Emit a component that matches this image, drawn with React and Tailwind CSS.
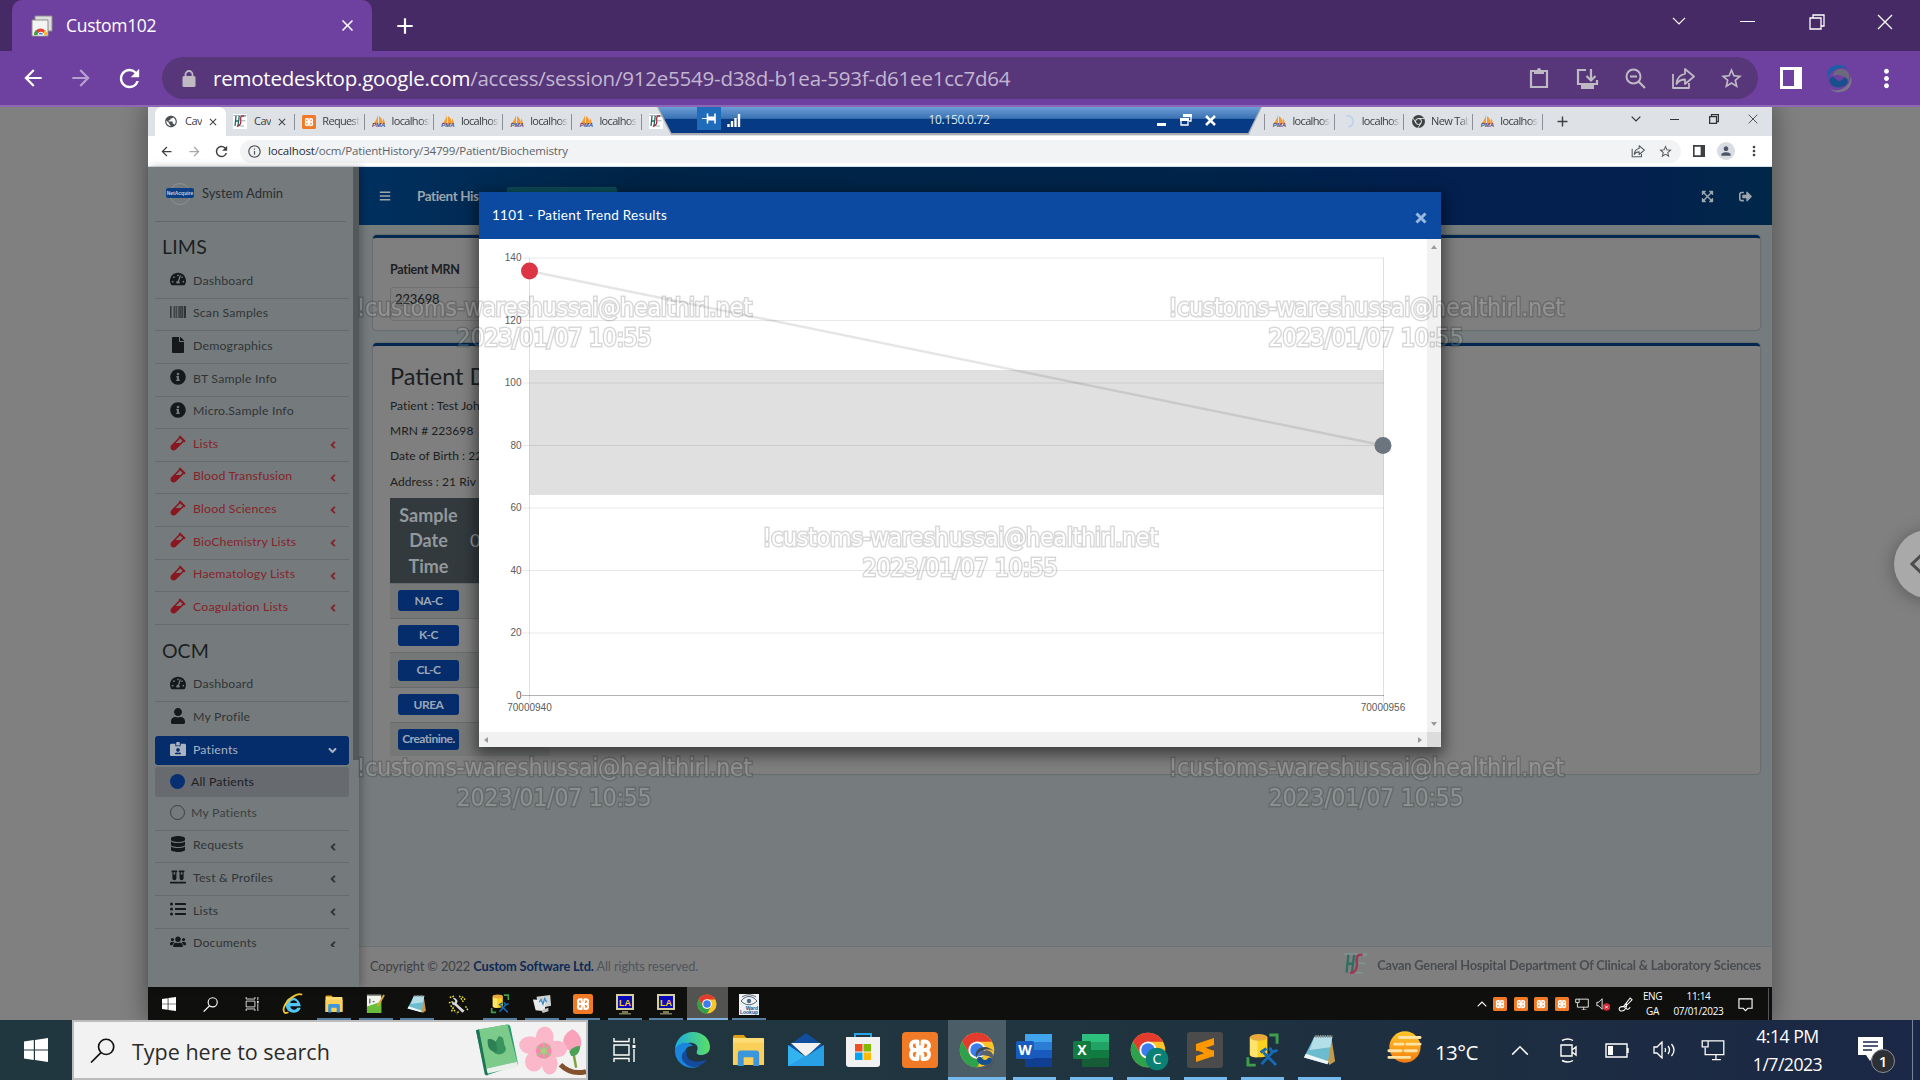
import React from "react";
import {
  FaTachometerAlt, FaBarcode, FaFile, FaInfoCircle, FaVial, FaUser, FaDatabase, FaVials,
  FaListUl, FaUsers, FaAngleLeft, FaAngleDown, FaExpandArrowsAlt, FaSignOutAlt, FaBars, FaIdCardAlt,
} from "react-icons/fa";
import {
  MdArrowBack, MdArrowForward, MdRefresh, MdStarBorder, MdClose, MdAdd, MdMoreVert, MdPublic,
  MdInfoOutline, MdPerson,
} from "react-icons/md";

const S = ({ w, h = w, box, className = "", children }) => (
  <svg width={w} height={h} viewBox={box} className={"shrink-0 " + className} fill="none">{children}</svg>
);

/* ---------- shared glyphs ---------- */
const Share = ({ size, sw = 1.8 }) => (
  <S w={size} box="0 0 24 24"><path d="M2 8v14h16v-5M14 3l9 7.500-9 7.500v-4.500c-4 0-6.500 1.200-8.500 4.500.5-6 3.500-9.500 8.500-10.200V3z" stroke="currentColor" strokeWidth={sw} strokeLinejoin="round" /></S>
);
const Panel = ({ size }) => (
  <S w={size} h={size} box="0 0 22 22"><path d="M0 0h22v22H0zM3 3v16h11V3z" fill="currentColor" fillRule="evenodd" /></S>
);
const Chevron = ({ w, up, sw = 1.3 }) => (
  <S w={w} h={w * 0.6} box="0 0 15 9"><path d={up ? "M1 8l6.500-6.500L14 8" : "M1 1l6.500 6.500L14 1"} stroke="currentColor" strokeWidth={sw} /></S>
);
const Restore = ({ w, sw = 1.3 }) => (
  <S w={w} box="0 0 16 16"><path d="M1 4h11v11H1zM4 4V1h11v11h-3" stroke="currentColor" strokeWidth={sw} /></S>
);
const Cross = ({ w }) => (
  <S w={w} box="0 0 16 16"><path d="M1 1l14 14M15 1L1 15" stroke="currentColor" strokeWidth="1.300" /></S>
);
const Windows = ({ size }) => (
  <S w={size} box="0 0 24 24"><path d="M0 3.500l9.800-1.400v9.400H0zM11 1.900L24 0v11.500H11zM0 12.600h9.800V22L0 20.600zM11 12.600h13V24l-13-1.900z" fill="white" /></S>
);
const Search = ({ size, color, sw = 1.8 }) => (
  <S w={size} box="0 0 24 24"><circle cx="15.500" cy="8.500" r="7.300" stroke={color} strokeWidth={sw} /><path d="M10.500 14L1 23.500" stroke={color} strokeWidth={sw} /></S>
);
const TaskView = ({ size }) => (
  <S w={size} box="0 0 24 24"><path d="M2 0v3.500h15V0M2 24v-3.500h15V24M2 7h15v10H2zM22 0v5.500M22 11v13" stroke="white" strokeWidth="1.400" /><path d="M20.500 7h3v3h-3z" fill="white" /></S>
);
const Chrome = ({ size, children }) => (
  <S w={size} box="0 0 48 48" className="overflow-visible">
    <circle cx="24" cy="24" r="23" fill="#fbc529" />
    <path d="M24 1A23 23 0 0 0 4.100 12.500L14 29.800 24 13h19.900A23 23 0 0 0 24 1z" fill="#e33b2e" />
    <path d="M4.100 12.500A23 23 0 0 0 24 47l10-17.200A11.500 11.500 0 0 1 14 29.800z" fill="#2da14c" />
    <circle cx="24" cy="24" r="11.500" fill="white" /><circle cx="24" cy="24" r="9" fill="#3b7ded" />
    {children}
  </S>
);
const SwirlShape = ({ dark }) => (
  <g>
    <path d="M3 16C0 8 5 1 14 1c5 0 9 2 12 6-5-4-10-4-15-1-5 2-7 5-8 10z" fill={dark ? "#3f4a57" : "#1a5fa8"} />
    <path d="M27 13c3 8-2 16-11 17-5 1-9-1-12-4 5 3 10 3 15 0 5-3 7-7 8-13z" fill={dark ? "#4d5561" : "#77788c"} />
    <path d="M8 13c0-6 7-9 12-7 6 2 7 9 4 13 0-4-3-6-6-6-3-1-6-2-10 0z" fill={dark ? "#59616b" : "#6b6a7c"} />
    <path d="M4 17c1-3 4-4 6-2s3 4 6 3 2-3 5-3 4 4 1 7c-5 5-17 4-18-5z" fill="#174f8f" />
  </g>
);
const Xampp = ({ size }) => (
  <S w={size} box="0 0 36 36">
    <rect width="36" height="36" rx="4" fill="#f17a26" />
    <path d="M15.500 9.500H13a4 4 0 0 0-4 4V14a4 4 0 0 0 4 4 4 4 0 0 0-4 4v1a4 4 0 0 0 4 4h2.500M20.500 9.500H23a4 4 0 0 1 4 4V14a4 4 0 0 1-4 4 4 4 0 0 1 4 4v1a4 4 0 0 1-4 4h-2.500M13 18h10M15.500 9.500v3.500q0 2.500 2.500 2.500t2.500-2.500V9.500M15.500 27v-3.500q0-2.500 2.500-2.500t2.500 2.500V27" stroke="white" strokeWidth="3.800" strokeLinejoin="round" strokeLinecap="round" />
  </S>
);
const Folder = ({ size }) => (
  <S w={size} box="0 0 34 34">
    <path d="M1 3q0-2 2-2h9l3 3H1z" fill="#e0a117" /><path d="M1 4h31q1 0 1 1v26q0 1-1 1H2q-1 0-1-1z" fill="#fddc75" />
    <path d="M1 9h32v22q0 1-1 1H2q-1 0-1-1z" fill="#fad05b" />
    <path d="M6 33V20q0-3 3-3h16q3 0 3 3v13h-6v-9H12v9z" fill="#3b96db" />
  </S>
);
const Notepad = ({ size }) => (
  <S w={size} box="0 0 36 36">
    <path d="M14 4h16l4 26-6 4z" fill="#c49a4e" /><path d="M12 4h19l-5 29L1 26z" fill="#6dbbce" />
    <path d="M12 4h19l-2 11-22 3z" fill="#b5dfe8" /><path d="M1 26l25 7 1-3L3 22z" fill="#eef6f7" />
    <path d="M13 3.500h18" stroke="#8b9294" strokeWidth="3" strokeDasharray="1.500 1" />
  </S>
);
const Sql = ({ size }) => (
  <S w={size} box="0 0 36 36">
    <path d="M25 2h8v9M3 25v8h8" stroke="#3e9e4c" strokeWidth="3" />
    <path d="M5 4v18c0 4 18 4 18 0V4z" fill="#fbd21f" /><path d="M5 4v18c0 2 4 3 8 3V4z" fill="#fee46c" />
    <ellipse cx="14" cy="4.500" rx="9" ry="3.500" fill="#e9a83b" />
    <path d="M19 20l13 13M29 19L17 32" stroke="#1569b5" strokeWidth="2.800" /><path d="M26 15q0 4 3 4t4-2M16 20l6-4" stroke="#1569b5" strokeWidth="3" />
  </S>
);
const Display = ({ w, sw = 1.5 }) => (
  <S w={w} h={w * 0.9} box="0 0 24 22"><path d="M7 2h16v14H7M4 9v7h3M1 2h6v6H1zM15 16v5M11 21h9" stroke="white" strokeWidth={sw} /></S>
);
const Pma = () => (
  <div className="flex w-[14px] shrink-0 flex-col items-center">
    <S w={14} h={10} box="0 0 14 10"><path d="M6 0v9H1c2-2 4-5 5-9zM7 1c3 2 4 5 4 8H7zM11 3c1 2 2 4 2 6h-2z" fill="#f59b34" /></S>
    <span className="-mt-[3px] font-['Liberation_Sans'] text-[6px] leading-[7px] font-bold text-[#4c4a86] italic">PMA</span>
  </div>
);
const Hse = ({ size = 13 }) => (
  <S w={size} h={size * 0.86} box="0 0 28 24">
    <path d="M1 1h26M18 2.500h8M17 11.500h8M14 22h8" stroke="#7d9c96" strokeWidth="1.600" />
    <path d="M6 2L4 22M4.500 12h6M12.500 2L10 22" stroke="#1d6b5c" strokeWidth="2.600" />
    <path d="M22 2c-7-1-7 3-6.500 8S15 22 8 22.500" stroke="#a82544" strokeWidth="2.600" />
  </S>
);

/* ---------- outer browser ---------- */
function OuterBrowser() {
  return (
    <header className="shrink-0 font-['Open_Sans',sans-serif] text-white">
      <div className="flex h-[51px] bg-[#462a65] pl-3">
        <div className="flex w-[360px] items-center rounded-t-[10px] bg-[#6e41a0] pr-[15px] pl-[19px]">
          <S w={22} box="0 0 22 22"><path d="M4 1h17v15H4z" fill="#dedede" stroke="#8d8d86" /><path d="M1 5h16v16H1z" fill="#f4f4f4" stroke="#8d8d86" /><path d="M3 20a6.500 6.500 0 0 1 13 0z" fill="#e24133" /><path d="M3 20a6 6 0 0 1 2-5l3 5z" fill="#37a650" /><path d="M16 20a6 6 0 0 0-2-5l-3 5z" fill="#f6c12c" /><path d="M7 20a2.800 2.800 0 0 1 5.600 0z" fill="#3a7ded" stroke="white" /></S>
          <span className="ml-[13px] flex-1 text-[17.500px] tracking-[-0.018em]">Custom102</span>
          <MdClose size={19} />
        </div>
        <div className="ml-[21px] flex flex-1 items-center"><MdAdd size={24} className="scale-110" /></div>
        <div className="flex h-[43px] items-center pr-px">
          <div className="flex w-[69px] justify-center"><Chevron w={14} /></div>
          <div className="flex w-[69px] justify-center"><div className="h-px w-[15px] bg-white" /></div>
          <div className="flex w-[69px] justify-center"><Restore w={16} /></div>
          <div className="flex w-[68px] justify-center"><Cross w={16} /></div>
        </div>
      </div>
      <div className="flex h-[56px] items-center border-b-2 border-[#8d66b5] bg-[#6e41a0] pl-[9px]">
        <div className="flex w-12 justify-center"><MdArrowBack size={26} /></div>
        <div className="flex w-12 justify-center opacity-50"><MdArrowForward size={26} /></div>
        <div className="flex w-12 justify-center"><MdRefresh size={29} /></div>
        <div className="ml-[9px] flex h-[42px] w-[1596px] items-center rounded-full bg-[#57377a] pl-[20px] text-[#bfb9c4]">
          <S w={14} h={17} box="0 0 14 17"><path d="M3.500 8V4.500a3.500 3.500 0 0 1 7 0V8" stroke="currentColor" strokeWidth="1.800" /><rect x=".5" y="6" width="13" height="11" rx="1.500" fill="currentColor" /></S>
          <div className="ml-[17px] flex-1 pt-px text-[20.500px] tracking-[-0.0105em] text-[#c3b6d0]"><span className="text-white">remotedesktop.google.com</span>/access/session/912e5549-d38d-b1ea-593f-d61ee1cc7d64</div>
          <div className="flex items-center pr-[3px]">
            <div className="flex w-12 justify-center"><S w={20} h={22} box="0 0 20 22"><path d="M2 4h16v16H2z" stroke="currentColor" strokeWidth="2.200" /><path d="M5 3h3a2 2 0 0 1 4 0h3v4H5z" fill="currentColor" /></S></div>
            <div className="flex w-12 justify-center"><S w={23} box="0 0 23 23"><path d="M10 3H2v14h19v-4M15 2v11M10.500 9l4.500 4.500L19.500 9" stroke="currentColor" strokeWidth="2.200" /><path d="M5 18h13v4H5z" fill="currentColor" /></S></div>
            <div className="flex w-12 justify-center"><S w={21} box="0 0 21 21"><circle cx="8.500" cy="8.500" r="7" stroke="currentColor" strokeWidth="2" /><path d="M13.500 13.500l6.500 6.500M5 8.500h7" stroke="currentColor" strokeWidth="2.200" /></S></div>
            <div className="flex w-12 justify-center"><Share size={24} /></div>
            <div className="flex w-12 justify-center"><MdStarBorder size={25} /></div>
          </div>
        </div>
        <div className="flex w-[65px] justify-center"><Panel size={22} /></div>
        <div className="flex w-8 justify-center"><S w={29} box="0 0 30 31"><SwirlShape /></S></div>
        <div className="flex flex-1 justify-center pr-[2px]"><MdMoreVert size={29} /></div>
      </div>
    </header>
  );
}

/* ---------- remote browser ---------- */
const TABS = [
  ["globe", "Cav", "x"], ["hse", "Cav", "x"], ["xampp", "Request"], ["pma", "localhost"], ["pma", "localhost"], ["pma", "localhost"], ["pma", "localhost"], ["hse", ""],
  ["", ""], ["", ""], ["", ""], ["", ""], ["", ""], ["", ""], ["", ""], ["", ""],
  ["pma", "localhost"], ["spin", "localhost"], ["chrome", "New Tab"], ["pma", "localhost"],
];
function TabIcon({ kind }) {
  if (kind === "globe") return <MdPublic size={15} className="text-[#4b4f52]" />;
  if (kind === "hse") return <div className="bg-white py-px"><Hse size={14} /></div>;
  if (kind === "xampp") return <Xampp size={14} />;
  if (kind === "pma") return <Pma />;
  if (kind === "spin") return <S w={13} box="0 0 14 14"><path d="M5 1a6 6 0 0 1 2 12" stroke="#b9d0f2" strokeWidth="1.600" /></S>;
  if (kind === "chrome") return <S w={13} box="0 0 14 14"><circle cx="7" cy="7" r="7" fill="#3e4043" /><circle cx="7" cy="7" r="3.200" fill="#3e4043" stroke="white" strokeWidth="1" /><path d="M7 3.800h6M4.200 8.500l-3-5M9.500 9l-3 5" stroke="white" strokeWidth=".8" /></S>;
  return null;
}
function InnerBrowser() {
  return (
    <div className="relative shrink-0 font-['Open_Sans',sans-serif] text-[#3c4043]">
      <div className="flex h-[29px] bg-[#dee1e5] pl-[7px]">
        {TABS.map(([kind, text, x], i) => (
          <div key={i} className={i === 0 ? "flex w-[71px] shrink-0 items-center rounded-t-[7px] bg-white pl-[9px]" : "flex w-[69.300px] shrink-0 items-center pl-[7px]"}>
            <div className="flex w-[14px] justify-center"><TabIcon kind={kind} /></div>
            <span className={x ? "ml-[7px] w-[17px] overflow-hidden text-[11px] tracking-[-0.05em] whitespace-nowrap" : "ml-[6px] w-[38px] overflow-hidden text-[11px] tracking-[-0.06em] whitespace-nowrap [mask-image:linear-gradient(90deg,#000_75%,transparent)]"}>{text}</span>
            {x && <MdClose size={12} className="ml-[5px]" />}
            {i > 0 && <div className="ml-auto h-4 w-px bg-[#8c9096]" />}
          </div>
        ))}
        <div className="flex w-[40px] items-center justify-center"><MdAdd size={17} /></div>
        <div className="flex h-[24px] flex-1 items-center justify-end text-[#333]">
          <div className="flex w-[39px] justify-center"><Chevron w={10} sw={1.8} /></div>
          <div className="flex w-[39px] justify-center"><div className="h-px w-[9px] bg-[#333]" /></div>
          <div className="flex w-[39px] justify-center"><Restore w={10} sw={2} /></div>
          <div className="flex w-[39px] justify-center"><Cross w={10} /></div>
        </div>
      </div>
      <div className="flex h-[31px] items-center border-b border-[#d5dde5] bg-white pl-1">
        <div className="flex w-7 justify-center"><MdArrowBack size={15} /></div>
        <div className="flex w-7 justify-center text-[#a5a7aa]"><MdArrowForward size={15} /></div>
        <div className="flex w-[27px] justify-center"><MdRefresh size={17} /></div>
        <div className="ml-[5px] flex h-[23px] w-[1441px] items-center rounded-full bg-[#f1f3f4] pl-[7px] text-[#55595d]">
          <MdInfoOutline size={15} />
          <span className="ml-[6px] flex-1 text-[11.500px] tracking-[-0.015em] text-[#5f6368]"><span className="text-[#2a2d30]">localhost</span>/ocm/PatientHistory/34799/Patient/Biochemistry</span>
          <div className="mr-[8px] flex items-center gap-[13px]"><Share size={14} /><MdStarBorder size={15} /></div>
        </div>
        <div className="flex w-9 justify-center"><Panel size={12} /></div>
        <div className="flex w-[18px] justify-center rounded-full bg-[#d9dde3] p-[2px] text-[#4a5568]"><MdPerson size={14} /></div>
        <div className="flex flex-1 justify-center"><MdMoreVert size={16} /></div>
      </div>

      <div className="absolute top-0 left-[509px] h-[28px] w-[605px] bg-[#a9adb2] [clip-path:polygon(0_0,100%_0,97.800%_100%,2.300%_100%)]">
        <div className="flex h-[26px] items-center bg-[linear-gradient(180deg,#6c9fd6_0%,#3a71b2_44%,#063a83_46%,#063a85_100%)] text-white [clip-path:polygon(.2%_0,99.800%_0,97.700%_100%,2.400%_100%)]">
          <div className="ml-[40px] flex h-[23px] w-[24px] items-center justify-center self-start bg-[#1f6cba]"><S w={14} h={11} box="0 0 14 11"><path d="M0 5.500h5" stroke="white" strokeWidth="1.200" /><path d="M5.500 .5v10M13 .5v10" stroke="white" strokeWidth="1.600" /><path d="M6 3.500h7v4H6z" fill="white" /></S></div>
          <S w={14} h={13} box="0 0 14 13" className="ml-[6px]"><path d="M1.500 13v-3M5 13V7M8.500 13V4M12 13V0" stroke="white" strokeWidth="2.400" /></S>
          <span className="flex-1 text-center text-[12px] tracking-[-0.025em] text-[#dde8f5]"><span className="ml-[20px]">10.150.0.72</span></span>
          <div className="mt-2 h-[3px] w-[9px] bg-white" />
          <div className="ml-[14px]"><S w={12} box="0 0 12 12"><path d="M4 1h7v6H9M1 5h7v6H1z" stroke="white" strokeWidth="1.300" /><path d="M3 0h9v3H3zM0 4h9v3H0z" fill="white" /></S></div>
          <div className="mr-[46px] ml-[13px]"><S w={11} box="0 0 11 11"><path d="M1 1l9 9M10 1l-9 9" stroke="white" strokeWidth="2.500" /></S></div>
        </div>
      </div>
    </div>
  );
}

/* ---------- LIMS page ---------- */
const LIMS = [
  [FaTachometerAlt, "Dashboard"], [FaBarcode, "Scan Samples"], [FaFile, "Demographics"], [FaInfoCircle, "BT Sample Info"], [FaInfoCircle, "Micro.Sample Info"],
  [FaVial, "Lists", 1], [FaVial, "Blood Transfusion", 1], [FaVial, "Blood Sciences", 1], [FaVial, "BioChemistry Lists", 1], [FaVial, "Haematology Lists", 1], [FaVial, "Coagulation Lists", 1],
];
function NavItem({ icon: Icon, text, red, arrow, last }) {
  return (
    <div className={"flex h-[32.650px] shrink-0 items-center border-b pl-[13px] " + (last ? "border-transparent " : "border-[#666a6d] ") + (red ? "text-[#85232b]" : "text-[#303437]")}>
      <div className={"flex w-[19px] justify-center pb-[5px] " + (red ? "text-[#8a1620]" : "text-[#16191b]")}><Icon size={16} /></div>
      <span className="ml-[6px] flex-1 pb-[2px] text-[12.300px] tracking-[0.015em]">{text}</span>
      {arrow && <FaAngleLeft size={12} className="mr-[10px]" />}
    </div>
  );
}
function Sidebar() {
  return (
    <aside className="relative z-10 flex w-[211px] shrink-0 bg-[#757b7c] shadow-[3px_0_8px_rgba(0,0,0,.25)]">
      <div className="flex w-[205px] flex-col pl-[7px]">
        <div className="flex h-[55px] w-[191px] items-center border-b border-[#63686b] pl-[11px]">
          <div className="relative flex h-[22px] w-[28px] items-center justify-center pb-[3px]">
            <div className="absolute top-0 size-[22px] rounded-full border border-[#8d9293]" />
            <div className="relative w-[28px] rounded-[2px] bg-[#0b3f85] text-center font-['Liberation_Sans'] text-[5px] leading-[10px] font-bold text-[#c4ccd6]">NetAcquire</div>
          </div>
          <span className="ml-[8px] text-[13px] text-[#2a2d30]">System Admin</span>
        </div>
        <div className="flex h-[725px] w-[194px] flex-col overflow-hidden">
          <div className="flex h-[44px] shrink-0 items-center pt-[6px] pl-[7px] text-[19.500px] tracking-[0.01em] text-[#1c1f21]">LIMS</div>
          {LIMS.map(([icon, text, red], i) => <NavItem key={i} icon={icon} text={text} red={red} arrow={red} />)}
          <div className="flex h-[44.500px] shrink-0 items-center pt-[6px] pl-[7px] text-[19.500px] text-[#1c1f21]">OCM</div>
          <NavItem icon={FaTachometerAlt} text="Dashboard" />
          <NavItem icon={FaUser} text="My Profile" last />
          <div className="mt-[1px] flex h-[29px] shrink-0 items-center rounded-[3px] bg-[#052d6b] pl-[13px] text-[#a9b3c2]">
            <div className="flex w-[19px] justify-center pb-[3px]"><FaIdCardAlt size={16} /></div>
            <span className="ml-[6px] flex-1 pb-px text-[12.300px] tracking-[0.015em]">Patients</span>
            <FaAngleDown size={13} className="mr-[10px]" />
          </div>
          <div className="mt-[2px] flex h-[30px] shrink-0 items-center rounded-[3px] bg-[#676b6f] pl-[15px] text-[#1d2023]">
            <div className="size-[15px] rounded-full bg-[#072f72]" /><span className="ml-[6px] text-[12.300px] tracking-[0.015em]">All Patients</span>
          </div>
          <div className="flex h-[34px] shrink-0 items-center border-b border-[#666a6d] pb-px pl-[15px] text-[#3b3f42]">
            <div className="size-[15px] rounded-full border-[1.500px] border-[#3b3f42]" /><span className="ml-[6px] text-[12.300px] tracking-[0.015em]">My Patients</span>
          </div>
          <NavItem icon={FaDatabase} text="Requests" arrow />
          <NavItem icon={FaVials} text="Test & Profiles" arrow />
          <NavItem icon={FaListUl} text="Lists" arrow />
          <NavItem icon={FaUsers} text="Documents" arrow />
        </div>
      </div>
      <div className="h-[593px] w-[6px] bg-[#55585a]" />
    </aside>
  );
}

function Card({ className, children }) {
  return <section className={"rounded-[4px] border-t-[3px] border-[#03284f] bg-[#7f7f7f] shadow-[0_0_2px_rgba(0,0,0,.4)] " + className}>{children}</section>;
}
function Main() {
  return (
    <main className="flex min-w-0 flex-1 flex-col bg-[#767c7d]">
      <nav className="flex h-[58px] shrink-0 items-center bg-[linear-gradient(90deg,#00305f_0%,#002446_20%,#00244a_60%,#03204f_75%,#03204f_90%,#002848_100%)] px-5 text-[#9da5ad]">
        <FaBars size={12} />
        <span className="ml-[26px] w-[88px] text-[13.500px] font-bold tracking-[-0.03em] whitespace-nowrap">Patient Hist</span>
        <div className="ml-[2px] h-[19px] w-[110px] rounded-[2px] bg-[#0b4b55]" />
        <div className="ml-auto flex gap-[25px]"><FaExpandArrowsAlt size={13} /><FaSignOutAlt size={13} /></div>
      </nav>
      <div className="flex min-h-0 flex-1 flex-col pr-[12px] pl-[14px]">
        <Card className="mt-[10px] h-[95px] shrink-0 px-[17px] pt-[23px]">
          <div className="text-[12.500px] leading-[18px] font-bold tracking-[-0.02em] text-[#1d2022]">Patient MRN</div>
          <div className="mt-[8px] flex h-[34px] w-[200px] items-center rounded-[3px] border border-[#6d7072] pb-2 pl-[4px] text-[13px] tracking-[-0.01em] text-[#15181a]">223698</div>
        </Card>
        <Card className="mt-[13px] h-[431px] shrink-0 px-[17px] pt-[14px] text-[#1b1e20]">
          <div className="text-[23.500px] leading-[32px]">Patient D</div>
          <div className="mt-px text-[12px] leading-[25.200px] tracking-[0.005em]">
            <p>Patient : Test Joh</p><p>MRN # 223698</p><p>Date of Birth : 22</p><p>Address : 21 Riv</p>
          </div>
          <div className="mt-[4px] flex h-[85px] w-[160px] bg-[#323a3e] text-center text-[18px] leading-[25.500px] font-bold text-[#92989b]">
            <div className="w-[77px] pt-[5px]">Sample Date Time</div><div className="pt-[30px] pl-[3px] font-normal">0</div>
          </div>
          {["NA-C", "K-C", "CL-C", "UREA", "Creatinine."].map((t, i) => (
            <div key={t} className={"flex h-[34.700px] w-[160px] items-center border-t border-[#686b6d] pl-[8px] " + (i % 2 ? "" : "bg-[#767777]")}>
              <div className="flex h-[21px] w-[61px] items-center justify-center rounded-[3px] bg-[#052d6b] text-[12px] font-bold tracking-[-0.04em] text-[#9ba7b8]">{t}</div>
            </div>
          ))}
        </Card>
      </div>
      <footer className="flex h-[41px] shrink-0 items-center border-t border-[#6c7173] bg-[#7f7f7f] pr-[11px] pl-[11px] text-[#3c4146]">
        <span className="text-[12.800px] tracking-[-0.01em]">Copyright © 2022 <b className="text-[#0c2a57]">Custom Software Ltd.</b> <span className="text-[#50555a]">All rights reserved.</span></span>
        <div className="ml-auto flex items-center gap-[9px] pb-[2px] opacity-80"><div className="mb-1"><Hse size={25} /></div><span className="text-[12.800px] font-bold tracking-[-0.016em]">Cavan General Hospital Department Of Clinical &amp; Laboratory Sciences</span></div>
      </footer>
    </main>
  );
}

/* ---------- trend dialog ---------- */
const yFor = (v) => 456.5 - v * 3.125;
function TrendModal() {
  return (
    <div className="absolute top-[85px] left-[331px] z-20 flex h-[555px] w-[962px] flex-col bg-white shadow-[0_5px_14px_3px_rgba(0,0,0,.5)]">
      <div className="flex h-[47px] shrink-0 items-center justify-between bg-[#0b4aa0] pr-[14px] pl-[13px] text-[13.500px] tracking-[0.02em] text-white">
        <span>1101 - Patient Trend Results</span>
        <S w={12} box="0 0 12 12" className="mt-1"><path d="M1.500 1.500l9 9M10.500 1.500l-9 9" stroke="#9bb8e0" strokeWidth="3" /></S>
      </div>
      <div className="flex flex-1">
        <S w={948} h={493} box="0 0 948 493">
          <rect x="50.500" y="131" width="854" height="125" fill="#e0e0e0" />
          {[0, 20, 40, 60, 80, 100, 120, 140].map((v) => (
            <g key={v}>
              <path d={`M43 ${yFor(v)}H905`} stroke={v ? "rgba(0,0,0,.09)" : "#b3b3b3"} />
              <text x="42.500" y={yFor(v) + 3} textAnchor="end" fontSize="10" fontFamily="Liberation Sans" fill="#5c5c5c">{v}</text>
            </g>
          ))}
          <path d="M50.500 19v445M904.500 19v445" stroke="rgba(0,0,0,.12)" />
          <path d="M50.500 32L904.500 206.500" stroke="rgba(0,0,0,.1)" strokeWidth="2.500" />
          <circle cx="50.500" cy="32" r="8.500" fill="#dc3545" /><circle cx="904" cy="206.500" r="8.500" fill="#6c757d" />
          <text x="50.500" y="472" textAnchor="middle" fontSize="10" fontFamily="Liberation Sans" fill="#5c5c5c">70000940</text>
          <text x="904" y="472" textAnchor="middle" fontSize="10" fontFamily="Liberation Sans" fill="#5c5c5c">70000956</text>
        </S>
        <div className="flex flex-1 flex-col items-center justify-between bg-[#f1f1f1] py-[6px]">
          <S w={6} h={4} box="0 0 6 4"><path d="M0 4l3-4 3 4z" fill="#9a9a9a" /></S><S w={6} h={4} box="0 0 6 4"><path d="M0 0l3 4 3-4z" fill="#9a9a9a" /></S>
        </div>
      </div>
      <div className="flex h-[15px] items-center bg-[#f1f1f1] pl-[5px]">
        <S w={4} h={6} box="0 0 4 6"><path d="M4 0L0 3l4 3z" fill="#9a9a9a" /></S>
        <S w={4} h={6} box="0 0 4 6" className="mr-[5px] ml-auto"><path d="M0 0l4 3-4 3z" fill="#9a9a9a" /></S>
        <div className="h-full w-[14px] bg-[#dcdcdc]" />
      </div>
    </div>
  );
}

/* ---------- remote taskbar ---------- */
const Lab = () => (
  <S w={20} h={21} box="0 0 20 21"><path d="M1 0h18v16H1z" fill="#d5cf9a" /><path d="M3 2h14v12H3z" fill="#0a0ab8" /><path d="M7 17h6v2H7zM4 19h12v1.500H4z" fill="#7c7a57" /><text x="10" y="11.500" textAnchor="middle" fontSize="9" fontWeight="bold" fontFamily="Liberation Sans" fill="#ffd21c">LA</text></S>
);
const INNER = [
  <Windows size={14} />, <Search size={15} color="white" />, <TaskView size={14} />,
  <S w={22} box="0 0 24 24"><path d="M20.500 14.500H9c.5 4.500 6 5 7.500 1.500h4C18 24.500 4 23 4 12.500S18.500 2 20.500 14.500zM9 11h7.500c-.5-4-7-4-7.500 0z" fill="#52c5f3" /><path d="M22 2c-5-3-17 5-20 14-1 5 1 7 5 5" stroke="#f0c330" strokeWidth="2" /></S>,
  <Folder size={18} />,
  <S w={19} h={20} box="0 0 20 21"><path d="M1 1h15v19H1z" fill="#f2f4ee" /><path d="M1 13l15-5v12H1z" fill="#69bd3b" /><path d="M4 5v5M7 8h2M1 1h15" stroke="#687068" strokeWidth="1.500" /><path d="M19 1l-7 12" stroke="#d9a632" strokeWidth="2" /></S>,
  <Notepad size={20} />,
  <S w={21} box="0 0 24 24"><path d="M2 4l6-2M1 10l5-1M16 3l4 4M4 20l3-6M20 14l3 5M12 20l-2 3M13 2l5 8M3 13l6 8" stroke="#efe33a" strokeWidth="1.600" strokeDasharray="2 1.200" /><path d="M5 4l4 1 2 3-1 3 9 8-2.500 2.500L8 13l-3-1-1-4 3 2 1.500-2z" fill="#d8d8d8" /></S>,
  <Sql size={20} />,
  <S w={20} box="0 0 22 22"><path d="M5 3l15-2 1 12-14 3z" fill="#cfd3d4" /><path d="M1 6l14 1-1 12-10-1z" fill="#e9ebeb" /><path d="M8 9l2-3 2 5 2-6 2 4" stroke="#3d8cc4" strokeWidth="1.500" /><path d="M10 18l8-3v4l-6 2z" fill="#bfc3c3" /></S>,
  <Xampp size={20} />, <Lab />, <Lab />, <Chrome size={20} />,
  <S w={20} h={21} box="0 0 20 21"><path d="M0 0h20v21H0z" fill="#eef2f5" /><path d="M2 7c5-6 11-6 16 0-5 5-11 5-16 0zM3 3c5-3 9-3 14 0" stroke="#5a6670" /><circle cx="10" cy="7" r="2.200" fill="#4f6a80" /><text x="19" y="15.500" textAnchor="end" fontSize="5" fontFamily="Liberation Sans" fontWeight="bold" fill="#1d4f86">Ward</text><text x="19" y="20" textAnchor="end" fontSize="5" fontFamily="Liberation Sans" fontWeight="bold" fill="#1d4f86">Lookup</text></S>,
];
function InnerTaskbar() {
  return (
    <div className="flex h-[33px] shrink-0 bg-[#0f100d] font-['Open_Sans',sans-serif] text-white">
      {INNER.map((icon, i) => (
        <div key={i} className={"flex w-[41.450px] shrink-0 flex-col items-center justify-between " + (i === 13 ? "bg-[#535451]" : "")}>
          <div className="flex h-[31px] items-center pt-[3px]">{icon}</div>
          {i > 3 && i !== 7 && <div className={i === 13 ? "h-[2px] w-full bg-[#7fb2df]" : "h-[2px] w-[34px] bg-[#567ea3]"} />}
        </div>
      ))}
      <div className="ml-auto flex items-center gap-[6.500px] pt-[1px]">
        <Chevron w={10} up sw={1.8} />
        <Xampp size={14} /><Xampp size={14} /><Xampp size={14} /><Xampp size={14} />
        <Display w={14} />
        <S w={14} box="0 0 16 16"><path d="M1 6v4h2l4 4V2L3 6z" stroke="white" /><circle cx="12" cy="11.500" r="4.300" fill="#d42a35" /><path d="M10.500 10l3 3M13.500 10l-3 3" stroke="white" /></S>
        <S w={15} box="0 0 16 16" className="ml-[2px]"><path d="M6 10L13 1l2 2-8 8zM6 10c-6 0-6 5-2 5s6-5 5-8M9 12c0 2 3 1 4-1" stroke="white" strokeWidth="1.100" /></S>
        <div className="w-[26px] text-center text-[10px] leading-[15px] tracking-[-0.04em]">ENG<br />GA</div>
        <div className="w-[53px] text-center text-[10px] leading-[15px] tracking-[-0.03em]">11:14<br />07/01/2023</div>
        <S w={15} box="0 0 16 16" className="ml-[6px]"><path d="M1 2h14v10h-4.500L8 14.500 5.500 12H1z" stroke="white" strokeWidth="1.200" /></S>
        <div className="ml-[9px] h-[32px] w-[4px] border-l border-[#55565a]" />
      </div>
    </div>
  );
}

/* ---------- watermark ---------- */
const Mark = ({ className }) => (
  <div className={"absolute z-30 w-[420px] text-center font-['DejaVu_Sans_Condensed','DejaVu_Sans',sans-serif] text-[25px] leading-[29.500px] tracking-[-0.017em] whitespace-nowrap text-white opacity-[.15] [-webkit-text-stroke:3px_#000] [font-stretch:condensed] [paint-order:stroke_fill] " + className}>
    !customs-wareshussai@healthirl.net<br />2023/01/07 10:55
  </div>
);

/* ---------- host taskbar ---------- */
const Office = ({ letter, a, b, c, d, tile }) => (
  <S w={36} h={33} box="0 0 36 33"><path d="M9 0h27v9H9z" fill={a} /><path d="M9 8h27v9H9z" fill={b} /><path d="M9 16h27v9H9z" fill={c} /><path d="M9 24h27v9H9z" fill={d} /><rect y="7" width="18" height="18" rx="1.500" fill={tile} /><text x="9" y="21" textAnchor="middle" fontSize="14" fontWeight="bold" fontFamily="Open Sans" fill="white">{letter}</text></S>
);
const APPS = [
  <S w={36} box="0 0 36 36"><defs><linearGradient id="ed" x1="0" x2="1"><stop stopColor="#1cabe0" /><stop offset="1" stopColor="#5be063" /></linearGradient></defs><path d="M1 18C1 8 9 0 19 0c10 0 17 7 17 15 0 6-5 8-9 8-4 0-5-2-4-4 3-7-5-9-9-8C7 11 3 14 1 18z" fill="url(#ed)" /><path d="M1 18c2-7 13-10 18-4-7-1-10 6-7 13 3 6 8 8 14 7C13 40 0 30 1 18z" fill="#1b85dd" /><path d="M13 18c-3 10 8 15 20 9-6 10-20 11-25 0-1-4 1-8 5-9z" fill="#144b9c" /></S>,
  <Folder size={33} />,
  <S w={36} box="0 0 36 36"><path d="M0 14L18 1l18 13v6H0z" fill="#0f4f9e" /><path d="M3 11h30L18 25z" fill="#f1f1f1" /><path d="M0 13l18 12 18-12v21H0z" fill="#33b4f0" /><path d="M0 34l36-21v21z" fill="#1f93e0" opacity=".6" /></S>,
  <S w={36} box="0 0 36 36"><path d="M10 7V2h16v5" stroke="#27a4e4" strokeWidth="2" /><path d="M1 5h34v27q0 3-3 3H4q-3 0-3-3z" fill="#f1f1f1" /><path d="M10 12h7.500v7.500H10z" fill="#ee4f24" /><path d="M18.500 12H26v7.500h-7.500z" fill="#80ba01" /><path d="M10 20.500h7.500V28H10z" fill="#02a4ef" /><path d="M18.500 20.500H26V28h-7.500z" fill="#ffb902" /></S>,
  <Xampp size={36} />,
  <Chrome size={36}><g transform="translate(20 19)"><SwirlShape dark /></g></Chrome>,
  <Office letter="W" a="#41a5ee" b="#2b7cd3" c="#185abd" d="#103f91" tile="#185abd" />,
  <Office letter="X" a="#2fbf7c" b="#21a366" c="#107c41" d="#185c37" tile="#107c41" />,
  <Chrome size={36}><circle cx="36" cy="36" r="15" fill="#0b8175" /><text x="36" y="43" textAnchor="middle" fontSize="19" fontFamily="Open Sans" fill="white">C</text></Chrome>,
  <S w={36} box="0 0 36 36"><rect width="36" height="36" rx="3" fill="#4b4b4b" /><path d="M27 6L9 12v7l18-6zM9 12v6l18 7v-6zM27 18L9 24v6l18-6z" fill="#ff9800" /></S>,
  <Sql size={35} />, <Notepad size={34} />,
];
function HostTaskbar() {
  return (
    <div className="flex h-[60px] shrink-0 bg-[linear-gradient(90deg,#21373f_0%,#20353f_55%,#1d2e40_75%,#1b2746_100%)] font-['Open_Sans',sans-serif] text-white">
      <div className="flex w-[72px] items-center justify-center"><Windows size={24} /></div>
      <div className="flex w-[516px] items-center overflow-hidden border-2 border-[#bcbcbc] bg-[#f2f2f2] pl-[16px] text-[#2b2b2b]">
        <Search size={25} color="#111" sw={1.6} />
        <span className="ml-[17px] flex-1 pt-[4px] text-[21.500px]">Type here to search</span>
        <S w={112} h={56} box="0 0 114 56">
          <path d="M2 8L34 2q2 0 3 2l8 39-33 11z" fill="#2e9a70" /><path d="M5 7l29-5 10 38-32 7z" fill="#7ccb8b" /><path d="M12 47l32-7 1 5-31 7z" fill="#e9efe9" /><path d="M2 8l3-1 9 47-3-1z" fill="#1c7555" />
          <path d="M25 14c7 0 4 6 7 11 3 8-12 11-13 2-1-5 4-7 6-13z" fill="#38935c" /><path d="M14 17c8-1 10 4 9 13-6 0-10-4-9-13z" fill="#2c8054" />
          <path d="M88 43c8 8 18 9 26 7" stroke="#83512d" strokeWidth="5" /><path d="M101 30l3 16" stroke="#7da23f" strokeWidth="2.500" />
          <path d="M92 24c-4-9 3-14 8-17 8 4 11 11 8 19-5 6-12 4-16-2z" fill="#f8a3b9" /><path d="M97 30c2-4 7-6 11-6 0 7-4 11-9 10z" fill="#4ba158" />
          <g fill="#fbb8ca"><ellipse cx="72" cy="15" rx="9" ry="11" /><ellipse cx="84" cy="27" rx="11" ry="8.500" /><ellipse cx="77" cy="42" rx="8" ry="11" /><ellipse cx="61" cy="40" rx="9" ry="10" /><ellipse cx="57" cy="23" rx="11" ry="9" /></g>
          <circle cx="71" cy="29" r="8" fill="#f48aa8" /><path d="M71 20v17M64 24l14 10M78 24L64 34" stroke="#8fce86" strokeWidth="1.600" /><circle cx="71" cy="29" r="2.800" fill="#9fd47f" />
        </S>
      </div>
      <div className="mr-[4px] flex w-[71px] items-center justify-center"><TaskView size={24} /></div>
      <div className="flex">
        {APPS.map((icon, i) => (
          <div key={i} className={"flex w-[57.100px] shrink-0 flex-col items-center justify-between " + (i === 5 ? "bg-[#4b5d66]" : "")}>
            <div className="flex h-[57px] items-center pt-[3px]">{icon}</div>
            {i > 4 && <div className={i === 5 ? "h-[3px] w-full bg-[#76b9ed]" : "h-[3px] w-[43px] bg-[#76b9ed]"} />}
          </div>
        ))}
      </div>
      <div className="ml-auto flex items-center">
        <S w={36} h={36} box="0 0 38 38" className="-mt-[6px]"><defs><linearGradient id="sun" x2="0" y2="1"><stop stopColor="#ffc628" /><stop offset="1" stopColor="#f57c12" /></linearGradient></defs><circle cx="20" cy="19" r="16.500" fill="url(#sun)" /><path d="M14 9h22M9 16h9M22 16h14M3 23h13M20 23h12M3 30h22" stroke="#ffe3a3" strokeWidth="3" strokeLinecap="round" /></S>
        <span className="ml-[13px] w-[68px] pt-[4px] text-[20.500px] tracking-[-0.03em]">13°C</span>
        <div className="flex w-[34px] justify-center"><Chevron w={18} up /></div>
        <div className="flex w-[64px] justify-center"><S w={18} h={25} box="0 0 18 25"><path d="M1 7h11v11H1zM12 12l4-3v8l-4-3M2 2.500q6-3 11 0M2 22.500q6 3 11 0" stroke="white" strokeWidth="1.400" /></S></div>
        <div className="flex w-[32px] justify-center"><S w={24} h={15} box="0 0 24 15"><path d="M1 1h21v13H1zM23 5v5" stroke="white" strokeWidth="1.400" /><path d="M3 3h5v9H3z" fill="white" /></S></div>
        <div className="flex w-[62px] justify-center"><S w={23} h={18} box="0 0 23 18"><path d="M1 6v6h3l5 5V1L4 6zM12 7q1 2 0 4M15 5q3 4 0 8M18.500 3q5 6 0 12" stroke="white" strokeWidth="1.300" /></S></div>
        <div className="flex w-[36px] justify-center"><Display w={24} sw={1.3} /></div>
        <div className="w-[112px] pl-px text-center text-[17.700px] leading-[28.500px] tracking-[-0.03em]">4:14 PM<br />1/7/2023</div>
        <div className="relative ml-[15px] h-[26px] w-[54px]">
          <S w={25} h={25} box="0 0 25 25"><path d="M0 0h25v18h-9l-4 6-4-6H0z" fill="white" /><path d="M5 5h15M5 9h15M5 13h9" stroke="#1d2946" strokeWidth="1.300" /></S>
          <div className="absolute top-[12px] left-[13px] flex size-[24px] items-center justify-center rounded-full border border-[#8a8f96] bg-[#2c2f33] text-[15px] font-semibold">1</div>
        </div>
        <div className="h-full w-[8px] border-l border-[#79839b]" />
      </div>
    </div>
  );
}

export default function App() {
  return (
    <div className="flex h-[1080px] w-[1920px] flex-col overflow-hidden bg-[#808080]">
      <OuterBrowser />
      <div className="relative flex h-[913px] shrink-0 overflow-hidden px-[148px]">
        <div className="relative flex w-[1624px] flex-col shadow-[0_0_22px_4px_rgba(0,0,0,.32)]">
          <InnerBrowser />
          <div className="flex min-h-0 flex-1 font-['Lato',sans-serif]"><Sidebar /><Main /></div>
          <InnerTaskbar />
          <div className="font-['Lato',sans-serif]"><TrendModal /></div>
        </div>
        <Mark className="top-[186px] left-[344px]" />
        <Mark className="top-[186px] left-[1156px]" />
        <Mark className="top-[416px] left-[750px]" />
        <Mark className="top-[646px] left-[344px]" />
        <Mark className="top-[646px] left-[1156px]" />
        <div className="absolute top-[423px] right-[-42px] flex size-[68px] items-center rounded-full bg-[#a9a9a9] pl-[15px] shadow-[0_2px_16px_2px_rgba(0,0,0,.25)]">
          <S w={14} h={24} box="0 0 14 24"><path d="M14 1.500L3 12l11 10.500" stroke="#4c4c4c" strokeWidth="3" /></S>
        </div>
      </div>
      <HostTaskbar />
    </div>
  );
}
